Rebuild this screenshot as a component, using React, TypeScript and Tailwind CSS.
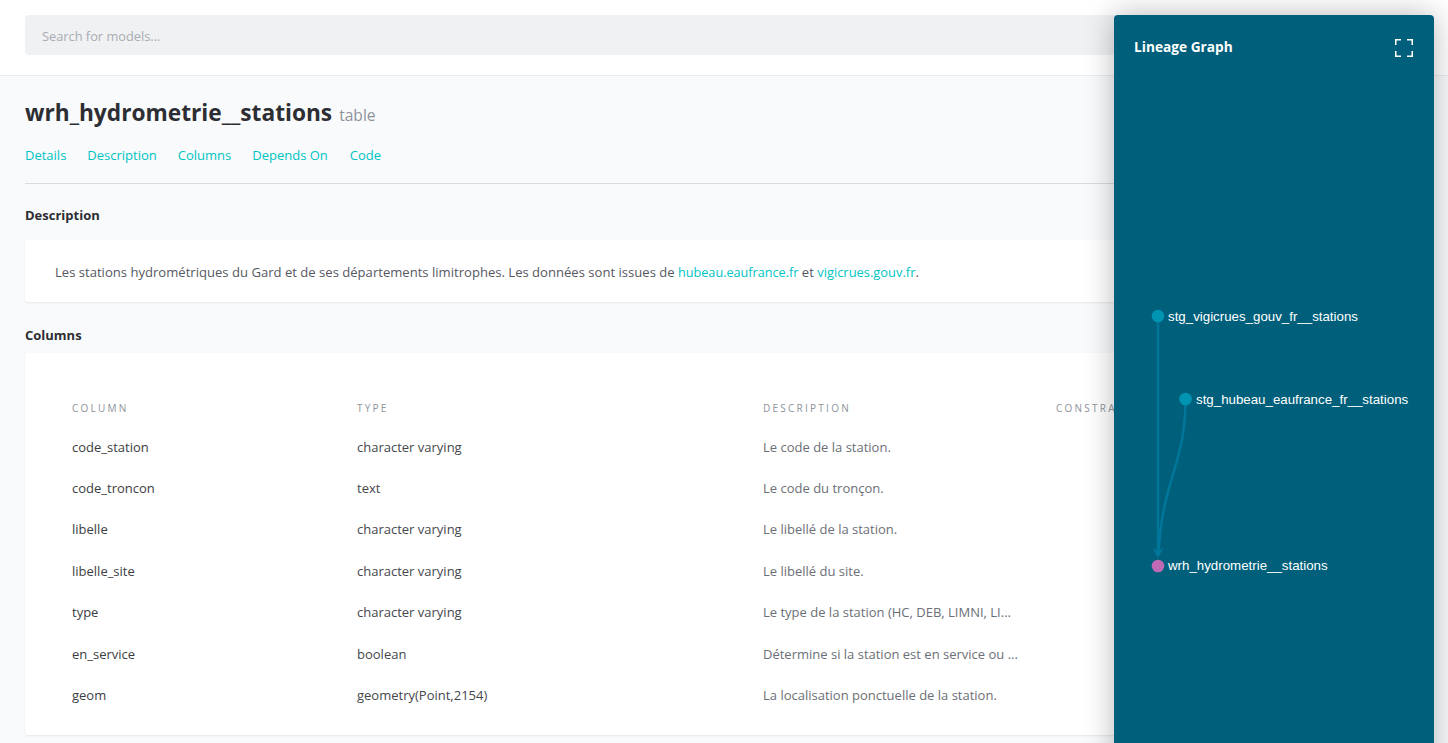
const rows = [
  ["code_station", "character varying", "Le code de la station."],
  ["code_troncon", "text", "Le code du tronçon."],
  ["libelle", "character varying", "Le libellé de la station."],
  ["libelle_site", "character varying", "Le libellé du site."],
  ["type", "character varying", "Le type de la station (HC, DEB, LIMNI, LI..."],
  ["en_service", "boolean", "Détermine si la station est en service ou ..."],
  ["geom", "geometry(Point,2154)", "La localisation ponctuelle de la station."],
];

export default function App() {
  return (
    <div className="relative h-[743px] w-[1448px] overflow-hidden bg-[#f9fafb] font-['Open_Sans',sans-serif] text-[13px] text-[#2d2e33]">
      <header className="h-[76px] border-b border-[#e9ebee] bg-white px-[25px] pt-[15px]">
        <div className="flex h-10 items-center rounded-[4px] bg-[#f0f1f3] px-[17px] pt-[4px] text-[12.8px] text-[#a9acb2]">Search for models...</div>
      </header>
      <main className="px-[25px]">
        <div className="flex items-baseline gap-[7px] pt-[20px]">
          <h1 className="text-[22.7px] leading-[34px] font-bold text-[#2d2e33]">wrh_hydrometrie__stations</h1>
          <span className="text-[15.6px] text-[#8d939b]">table</span>
        </div>
        <nav className="mt-[16px] flex gap-[21px] border-b border-[#d9dbde] pb-[19px] text-[13px] leading-[18px] text-[#00c4c4]">
          <span>Details</span><span>Description</span><span>Columns</span><span>Depends On</span><span className="ml-[1px]">Code</span>
        </nav>
        <h2 className="mt-[22px] text-[13px] leading-[18px] font-bold">Description</h2>
        <section className="mt-4 h-[62px] rounded-[3px] bg-white px-[30px] pt-[22px] text-[13.08px] leading-[20px] text-[#55585f] shadow-[0_1px_2px_rgba(0,0,0,0.08)]">
          Les stations hydrométriques du Gard et de ses départements limitrophes. Les données sont issues de <span className="text-[12.65px] text-[#00c4c4]">hubeau.eaufrance.fr</span> et <span className="text-[12.9px] text-[#00c4c4]">vigicrues.gouv.fr</span>.
        </section>
        <h2 className="mt-[24px] text-[13px] leading-[18px] font-bold">Columns</h2>
        <section className="mt-[9px] h-[382px] rounded-[3px] bg-white pt-[46px] pl-[47px] shadow-[0_1px_2px_rgba(0,0,0,0.08)]">
          <div className="grid grid-cols-[285px_406px_293px_1fr] text-[10px] leading-[18px] tracking-[0.225em] text-[#8d939b] uppercase">
            <span>Column</span><span>Type</span><span>Description</span><span>Constraints</span>
          </div>
          <div className="mt-[9.65px] grid auto-rows-[41.4px] grid-cols-[285px_406px_293px_1fr] items-center">
            {rows.map((r) => [
              <span key={r[0] + "a"} className="text-[#3b3d42]">{r[0]}</span>,
              <span key={r[0] + "b"} className="text-[#45474d]">{r[1]}</span>,
              <span key={r[0] + "c"} className="text-[#6b6f76]">{r[2]}</span>,
              <span key={r[0] + "d"} />,
            ])}
          </div>
        </section>
      </main>
      <aside className="absolute top-[15px] left-[1114px] h-[760px] w-[320px] rounded-[4px] bg-[#005f7a] text-white shadow-[0_0_30px_rgba(0,0,0,0.28)]">
        <div className="flex items-center justify-between pt-[22px] pr-[21px] pl-5">
          <span className="text-[13.7px] leading-5 font-bold">Lineage Graph</span>
          <svg width="18" height="18" viewBox="0 0 18 18" fill="none" stroke="#fff" strokeWidth="1.5" className="mt-[1px]">
            <path d="M.75 6V.75H6M12 .75h5.25V6M17.25 12v5.25H12M6 17.25H.75V12" />
          </svg>
        </div>
        <svg width="320" height="300" viewBox="0 0 320 300" className="absolute top-[285px] left-0 overflow-visible" fontFamily="'Liberation Sans',sans-serif" fontSize="13.3">
          <path d="M44 16V254" stroke="#00779a" strokeWidth="2.5" fill="none" />
          <path d="M71.5 99C71.5 165 48 180 44.5 254" stroke="#00779a" strokeWidth="2.5" fill="none" />
          <path d="M38.5 248L44 258L49.5 248L44 251Z" fill="#00779a" />
          <circle cx="44" cy="16" r="6.3" fill="#0094b3" />
          <circle cx="71.5" cy="99" r="6.3" fill="#0094b3" />
          <circle cx="44" cy="266" r="6.3" fill="#c06ab5" />
          <text x="54" y="20.5" fill="#fff">stg_vigicrues_gouv_fr__stations</text>
          <text x="82" y="103.5" fill="#fff">stg_hubeau_eaufrance_fr__stations</text>
          <text x="54" y="270" fill="#fff">wrh_hydrometrie__stations</text>
        </svg>
      </aside>
    </div>
  );
}
